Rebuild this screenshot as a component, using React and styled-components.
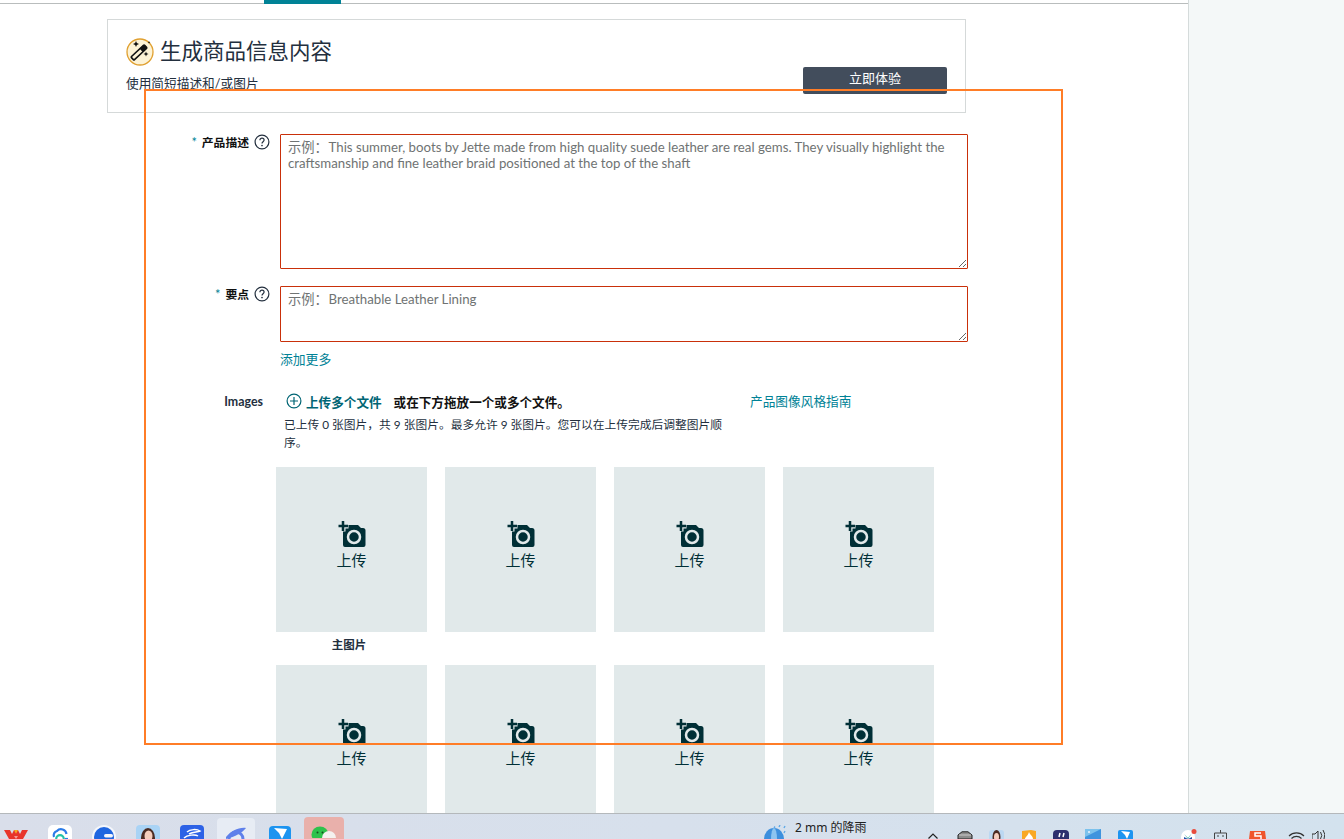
import React from "react";
import styled, { createGlobalStyle } from "styled-components";

const GlobalStyle = createGlobalStyle`
  html, body {
    margin: 0;
    padding: 0;
    height: 100%;
    overflow: hidden;
    background: #fff;
    font-family: "Lato", "Noto Sans CJK SC", sans-serif;
    color: #0f1111;
  }
`;

const WandIcon = () => (
  <svg width="28" height="28" viewBox="0 0 28 28">
    <circle cx="14" cy="14" r="13" fill="#fdf3d6" stroke="#e0a030" strokeWidth="1.3" />
    <g transform="rotate(47 13 14.500)">
      <rect x="10.800" y="5.500" width="4.400" height="18" rx=".8" fill="#fdf3d6" stroke="#111" strokeWidth="1.600" />
      <rect x="10.800" y="5.500" width="4.400" height="6" fill="#111" />
    </g>
    <path d="M10 3l.9 2.100L13 6l-2.100.9L10 9l-.9-2.100L7 6l2.100-.9z" fill="#111" />
    <path d="M20 13.500l.7 1.800 1.800.7-1.800.7-.7 1.800-.7-1.800-1.800-.7 1.800-.7z" fill="#111" />
    <path d="M23 3l.4 1 1 .4-1 .4-.4 1-.4-1-1-.4 1-.4z" fill="#111" />
  </svg>
);

const HelpIcon = () => (
  <svg width="16" height="16" viewBox="0 0 16 16" fill="none">
    <circle cx="8" cy="8" r="6.900" stroke="#232f3e" strokeWidth="1.200" />
    <path d="M5.900 6.200C5.900 4.900 6.900 4.200 8 4.200c1.200 0 2.100.8 2.100 1.900 0 1.600-2.100 1.700-2.100 3.400" stroke="#232f3e" strokeWidth="1.200" />
    <circle cx="8" cy="11.500" r=".85" fill="#232f3e" />
  </svg>
);

const PlusCircleIcon = () => (
  <svg width="16" height="16" viewBox="0 0 16 16" fill="none">
    <circle cx="8" cy="8" r="6.900" stroke="#006574" strokeWidth="1.200" />
    <path d="M8 4v8M4 8h8" stroke="#006574" strokeWidth="1.200" />
  </svg>
);

const CameraIcon = () => (
  <svg width="28" height="28" viewBox="0 0 28 28" fill="none">
    <path d="M10 5H20L23 8H25A2.500 2.500 0 0 1 27.500 10.500V25A2 2 0 0 1 25.500 27H7A2 2 0 0 1 5 25V8H10z" fill="#002f36" />
    <path d="M5 .5V11.500M0 6H10.500" stroke="#e1e9ea" strokeWidth="5" />
    <path d="M5 1V11M.5 6H10" stroke="#002f36" strokeWidth="2.500" />
    <circle cx="16" cy="17" r="6" stroke="#e1e9ea" strokeWidth="2.500" />
  </svg>
);

const TaskIcon = ({ kind }) => {
  if (kind === "wps") {
    return (
      <svg width="24" height="9" viewBox="0 0 24 9">
        <path d="M0 0h6l2 4 2-4h4l2 4 2-4h6l-5 9H5z" fill="#e8352b" />
        <path d="M10 0h4l-2 4z" fill="#f5a623" />
        <path d="M7 9l5-6 5 6z" fill="#e8352b" />
        <path d="M10 6l2 3 2-3z" fill="#fff" opacity=".5" />
      </svg>
    );
  }
  if (kind === "cloud") {
    return (
      <svg width="24" height="14" viewBox="0 0 24 14">
        <rect width="24" height="20" rx="5" fill="#fff" />
        <path d="M6 12a4.500 4.500 0 0 1 3-6 5.500 5.500 0 0 1 9.500 3" fill="none" stroke="#2b7be8" strokeWidth="2.200" />
        <circle cx="12" cy="14" r="3.800" fill="none" stroke="#22c2a8" strokeWidth="2.200" />
        <path d="M17 14h3" stroke="#2b7be8" strokeWidth="2.200" />
      </svg>
    );
  }
  if (kind === "ring") {
    return (
      <svg width="24" height="14" viewBox="0 0 24 14">
        <circle cx="12" cy="12" r="12" fill="#f4f6fb" />
        <circle cx="12" cy="12" r="10" fill="#1f66e0" />
        <rect x="12" y="9" width="9" height="3.500" rx="1.700" fill="#f4f6fb" />
      </svg>
    );
  }
  if (kind === "avatar") {
    return (
      <svg width="24" height="14" viewBox="0 0 24 14">
        <rect width="24" height="20" rx="4" fill="#a9d3f5" />
        <ellipse cx="12" cy="13" rx="7" ry="10" fill="#4a2a22" />
        <ellipse cx="12.500" cy="11" rx="4" ry="5.500" fill="#f4cdbd" />
      </svg>
    );
  }
  if (kind === "blue") {
    return (
      <svg width="24" height="14" viewBox="0 0 24 14">
        <rect width="24" height="20" rx="4" fill="#2d62e6" />
        <path d="M7 7c3-3 10-3 13-1-2 1-9 1-11 3M4 13c3-3 11-4 14-2" fill="none" stroke="#fff" strokeWidth="1.500" />
      </svg>
    );
  }
  if (kind === "browser") {
    return (
      <svg width="20" height="13" viewBox="0 0 20 13">
        <circle cx="10" cy="12" r="7" fill="none" stroke="#5f80ea" strokeWidth="3" />
        <path d="M0 10C5 4 13 0 20 1c-3 4-11 9-20 11z" fill="#5f80ea" />
      </svg>
    );
  }
  if (kind === "plane") {
    return (
      <svg width="22" height="13" viewBox="0 0 22 13">
        <rect width="22" height="18" rx="4" fill="#1d94f0" />
        <path d="M5 2l13 1-5 10-3-6z" fill="#fff" />
      </svg>
    );
  }
  if (kind === "wechat") {
    return (
      <svg width="26" height="12" viewBox="0 0 26 12">
        <ellipse cx="9" cy="8.500" rx="8.500" ry="8" fill="#2ec24c" />
        <circle cx="18" cy="12" r="7" fill="#f4f1ef" />
        <circle cx="6.500" cy="6.500" r="1" fill="#15501f" />
        <circle cx="11.500" cy="6.500" r="1" fill="#15501f" />
      </svg>
    );
  }
  if (kind === "weather") {
    return (
      <svg width="23" height="14" viewBox="0 0 23 14">
        <path d="M0 14A10 11 0 0 1 20 14z" fill="#3d8fdd" />
        <path d="M7 14A3 11 0 0 1 13 14z" fill="#8cc4f0" />
        <path d="M11 1.500l-1 1.500M16 0l-1 2M21 1l-1 2M21 6l-1 2" stroke="#5fa8e6" strokeWidth="1.400" />
      </svg>
    );
  }
  if (kind === "chevron") {
    return (
      <svg width="10" height="6" viewBox="0 0 10 6" fill="none">
        <path d="M.5 5.500L5 1l4.500 4.500" stroke="#222" strokeWidth="1.200" />
      </svg>
    );
  }
  if (kind === "cap") {
    return (
      <svg width="16" height="8" viewBox="0 0 16 8">
        <path d="M1 8V4L5 .8h6L15 4v4z" fill="#8c8c8c" stroke="#222" strokeWidth="1" />
        <path d="M2 4h12" stroke="#ccc" strokeWidth="1" />
      </svg>
    );
  }
  if (kind === "person") {
    return (
      <svg width="15" height="9" viewBox="0 0 15 9">
        <rect width="15" height="12" rx="3" fill="#bcd8f2" />
        <ellipse cx="7.500" cy="7" rx="4" ry="7" fill="#4a2a22" />
        <ellipse cx="7.500" cy="7" rx="2.500" ry="4" fill="#f4cdbd" />
      </svg>
    );
  }
  if (kind === "flame") {
    return (
      <svg width="14" height="9" viewBox="0 0 14 9">
        <path d="M0 1l9-1 5 1v8H0z" fill="#f9a825" />
        <path d="M7 2c1 3 4 4 4 7H3c0-2 3-3 4-7z" fill="#fff" />
      </svg>
    );
  }
  if (kind === "navy") {
    return (
      <svg width="16" height="9" viewBox="0 0 16 9">
        <rect width="16" height="13" rx="4" fill="#2e2f6e" />
        <path d="M7 3L6 7M11 3l-1 4" stroke="#fff" strokeWidth="1.500" />
      </svg>
    );
  }
  if (kind === "photo") {
    return (
      <svg width="16" height="10" viewBox="0 0 16 10">
        <rect width="16" height="10" fill="#3f94de" />
        <path d="M0 0h16L0 8z" fill="#7cc2ec" />
        <rect x="3" y="2" width="2" height="2" fill="#cfe6fa" />
      </svg>
    );
  }
  if (kind === "swift") {
    return (
      <svg width="15" height="9" viewBox="0 0 15 9">
        <rect width="15" height="12" rx="2" fill="#1d94f0" />
        <path d="M3 1l9 1-3 7-2-4z" fill="#fff" />
      </svg>
    );
  }
  if (kind === "multi") {
    return (
      <svg width="16" height="10" viewBox="0 0 16 10">
        <circle cx="7" cy="8" r="7" fill="#fff" />
        <path d="M3 5l4 4 4-5-4 6z" fill="#12a594" />
        <path d="M3 8l4 2 4-2v2H3z" fill="#1f4fa8" />
        <circle cx="13" cy="2.500" r="2.500" fill="#e84c3d" />
      </svg>
    );
  }
  if (kind === "robot") {
    return (
      <svg width="13" height="9" viewBox="0 0 13 9" fill="none">
        <path d="M6.500 0v3M.5 3h12v6M.5 3v6M4 5v2M9 5v2" stroke="#444" strokeWidth="1" />
      </svg>
    );
  }
  if (kind === "sogou") {
    return (
      <svg width="17" height="8" viewBox="0 0 17 8">
        <path d="M1 0h15l1 8H0z" fill="#f0552c" />
        <path d="M12 2H6v3h6v3" fill="none" stroke="#fff" strokeWidth="1.500" />
      </svg>
    );
  }
  if (kind === "wifi") {
    return (
      <svg width="17" height="7" viewBox="0 0 17 7" fill="none">
        <path d="M1 4a10.500 10.500 0 0 1 15 0M3.500 6.500a7 7 0 0 1 10 0" stroke="#333" strokeWidth="1.100" />
      </svg>
    );
  }
  return (
    <svg width="13" height="9" viewBox="0 0 13 9" fill="none">
      <path d="M0 4h3l3-3v9M0 4v5M8.500 2a6 6 0 0 1 0 7M11 0a9 9 0 0 1 1 9" stroke="#333" strokeWidth="1" />
    </svg>
  );
};

const tiles = [
  { id: 1, caption: "主图片" },
  { id: 2 },
  { id: 3 },
  { id: 4 },
  { id: 5 },
  { id: 6 },
  { id: 7 },
  { id: 8 },
];

const leftApps = [
  { kind: "wps", left: 4, top: 16 },
  { kind: "cloud", left: 20, top: 11 },
  { kind: "ring", left: 20, top: 11 },
  { kind: "avatar", left: 20, top: 11 },
  { kind: "blue", left: 20, top: 11 },
];

const trayApps = [
  { kind: "chevron", left: 0, top: 19 },
  { kind: "cap", left: 19, top: 17 },
  { kind: "person", left: 16, top: 16 },
  { kind: "flame", left: 18, top: 16 },
  { kind: "navy", left: 17, top: 16 },
  { kind: "photo", left: 16, top: 15 },
  { kind: "swift", left: 17, top: 16 },
  { kind: "multi", left: 48, top: 15 },
  { kind: "robot", left: 17, top: 16 },
  { kind: "sogou", left: 22, top: 17 },
  { kind: "wifi", left: 22, top: 18 },
  { kind: "speaker", left: 7, top: 16 },
];

export default function App() {
  return (
    <Screen>
      <GlobalStyle />
      <Main>
        <Content>
          <TopBar>
            <ActiveTab />
          </TopBar>
          <Page>
            <Banner>
              <BannerTitle>
                <WandIcon />
                <h1>生成商品信息内容</h1>
              </BannerTitle>
              <BannerFoot>
                <p>使用简短描述和/或图片</p>
                <TryButton>立即体验</TryButton>
              </BannerFoot>
            </Banner>

            <FormRow>
              <FieldLabel>
                <span>
                  <Star>*</Star> 产品描述
                </span>
                <HelpIcon />
              </FieldLabel>
              <Field
                $height={135}
                readOnly
                placeholder={"示例：\u200AThis summer, boots by Jette made from high quality suede leather are real gems. They visually highlight the craftsmanship and fine leather braid positioned at the top of the shaft"}
              />
            </FormRow>

            <FormRow>
              <FieldLabel>
                <span>
                  <Star>*</Star> 要点
                </span>
                <HelpIcon />
              </FieldLabel>
              <div>
                <Field $height={56} readOnly placeholder={"示例：\u200ABreathable Leather Lining"} />
                <AddMore href="#">添加更多</AddMore>
              </div>
            </FormRow>

            <ImagesRow>
              <ImagesLabel>Images</ImagesLabel>
              <ImagesHead>
                <div>
                  <UploadLine>
                    <PlusCircleIcon />
                    <UploadLink>上传多个文件</UploadLink>
                    <span>或在下方拖放一个或多个文件。</span>
                  </UploadLine>
                  <UploadNote>
                    已上传 0 张图片，共 9 张图片。最多允许 9 张图片。您可以在上传完成后调整图片顺序。
                  </UploadNote>
                </div>
                <GuideLink href="#">产品图像风格指南</GuideLink>
              </ImagesHead>
            </ImagesRow>

            <TileGrid>
              {tiles.map((tile) => (
                <TileCell key={tile.id}>
                  <Tile>
                    <CameraIcon />
                    <span>上传</span>
                  </Tile>
                  {tile.caption && <Caption>{tile.caption}</Caption>}
                </TileCell>
              ))}
            </TileGrid>
          </Page>
        </Content>
        <SideRail />
      </Main>

      <Taskbar>
        {leftApps.map((app) => (
          <TaskSlot key={app.kind} $left={app.left} $top={app.top}>
            <TaskIcon kind={app.kind} />
          </TaskSlot>
        ))}
        <ActiveApp $bg="#e7ecf4" $left={13} $width={38} $top={4}>
          <TaskIcon kind="browser" />
        </ActiveApp>
        <TaskSlot $left={14} $top={12}>
          <TaskIcon kind="plane" />
        </TaskSlot>
        <ActiveApp $bg="#e9b0ab" $left={13} $width={40} $top={3}>
          <TaskIcon kind="wechat" />
        </ActiveApp>
        <Weather>
          <TaskIcon kind="weather" />
          <span>2 mm 的降雨</span>
        </Weather>
        <Tray>
          {trayApps.map((app) => (
            <TaskSlot key={app.kind} $left={app.left} $top={app.top}>
              <TaskIcon kind={app.kind} />
            </TaskSlot>
          ))}
        </Tray>
      </Taskbar>

      <Highlight />
    </Screen>
  );
}

const Screen = styled.div`
  position: relative;
  display: flex;
  flex-direction: column;
  width: 1344px;
  height: 839px;
  overflow: hidden;
`;

const Main = styled.div`
  display: flex;
  flex: 1;
  min-height: 0;
`;

const Content = styled.main`
  width: 1188px;
  flex-shrink: 0;
  overflow: hidden;
  background: #fff;
  border-right: 1px solid #d5dbdb;
`;

const SideRail = styled.aside`
  flex: 1;
  background: #f4f8f8;
`;

const TopBar = styled.div`
  height: 3px;
  border-bottom: 1px solid #b9bdbd;
  padding-left: 264px;
`;

const ActiveTab = styled.div`
  width: 77px;
  height: 4px;
  background: #008296;
`;

const Page = styled.div`
  padding: 15px 0 0 107px;
`;

const Banner = styled.section`
  box-sizing: border-box;
  width: 859px;
  height: 94px;
  padding: 18px 18px 0;
  border: 1px solid #d5d9d9;
  margin-bottom: 21px;
`;

const BannerTitle = styled.div`
  display: flex;
  align-items: center;
  gap: 6px;

  h1 {
    margin: -2px 0 0;
    font-size: 21.500px;
    font-weight: 400;
    line-height: 28px;
    color: #232f3e;
  }
`;

const BannerFoot = styled.div`
  display: flex;
  justify-content: space-between;

  p {
    margin: 8px 0 0;
    font-size: 12.700px;
    line-height: 18px;
    color: #232f3e;
  }
`;

const TryButton = styled.button`
  width: 144px;
  height: 27px;
  margin-top: 1px;
  padding: 0 0 6px;
  border: none;
  border-radius: 2px;
  background: #424d5c;
  color: #fff;
  font-family: inherit;
  font-size: 13px;
`;

const FormRow = styled.div`
  display: grid;
  grid-template-columns: 163px 688px;
  column-gap: 10px;
  margin-bottom: 17px;
`;

const FieldLabel = styled.label`
  display: flex;
  justify-content: flex-end;
  align-items: center;
  align-self: start;
  gap: 5px;
  height: 16px;
  font-size: 11.800px;
  font-weight: 700;
  color: #0f1111;

  span {
    margin-top: -2px;
  }
`;

const Star = styled.span`
  margin-right: 2px;
  color: #008296;
  font-size: 13px;
  font-weight: 400;
`;

const Field = styled.textarea`
  display: block;
  box-sizing: border-box;
  width: 688px;
  height: ${(p) => p.$height}px;
  padding: 4px 7px;
  border: 1px solid #c9300a;
  border-radius: 1px;
  outline: none;
  font-family: "Lato", "Noto Sans CJK SC", sans-serif;
  font-size: 13.250px;
  line-height: 16px;
  color: #111;
  background: #fff;

  &::placeholder {
    color: #6f7373;
    opacity: 1;
  }
`;

const AddMore = styled.a`
  display: block;
  margin-top: 8px;
  font-size: 12.800px;
  line-height: 18px;
  color: #008296;
  text-decoration: none;
`;

const ImagesRow = styled.div`
  display: grid;
  grid-template-columns: 156px 1fr;
  column-gap: 21px;
  margin-top: 24px;
`;

const ImagesLabel = styled.div`
  padding-top: 3px;
  font-size: 12.400px;
  font-weight: 700;
  line-height: 14px;
  color: #232f3e;
  text-align: right;
`;

const ImagesHead = styled.div`
  display: grid;
  grid-template-columns: 442px auto;
  column-gap: 24px;
  align-items: start;
`;

const UploadLine = styled.div`
  display: flex;
  align-items: center;
  gap: 4px;
  padding-left: 2px;
  height: 18px;
  font-size: 12.600px;
  font-weight: 700;
  color: #111;
`;

const UploadLink = styled.span`
  color: #006574;
  margin-right: 8px;
`;

const UploadNote = styled.p`
  margin: 6px 0 0;
  font-size: 11.750px;
  line-height: 18px;
  color: #232f3e;
`;

const GuideLink = styled.a`
  font-size: 12.700px;
  line-height: 18px;
  color: #008296;
  text-decoration: none;
`;

const TileGrid = styled.div`
  display: grid;
  grid-template-columns: repeat(4, 151px);
  grid-auto-rows: 198px;
  column-gap: 18px;
  margin: 15px 0 0 169px;
`;

const TileCell = styled.div`
  display: flex;
  flex-direction: column;
  align-items: center;
`;

const Tile = styled.div`
  display: flex;
  flex-direction: column;
  align-items: center;
  box-sizing: border-box;
  width: 151px;
  height: 165px;
  padding-top: 53px;
  background: #e1e9ea;
  color: #002f36;
  font-size: 15px;
  line-height: 20px;

  span {
    margin-top: 2px;
  }
`;

const Caption = styled.div`
  margin-top: 6px;
  margin-right: 5px;
  font-size: 11.500px;
  font-weight: 700;
  line-height: 14px;
  color: #232f3e;
`;

const Taskbar = styled.footer`
  display: flex;
  flex-shrink: 0;
  align-items: flex-start;
  box-sizing: border-box;
  height: 26px;
  padding-right: 19px;
  border-top: 1px solid #b4b8bb;
  overflow: hidden;
  background: linear-gradient(90deg, #d9deea 0%, #d7e0ec 50%, #d3e2ee 100%);
  font-size: 12px;
  color: #222;
`;

const TaskSlot = styled.div`
  display: flex;
  flex-shrink: 0;
  margin-left: ${(p) => p.$left}px;
  margin-top: ${(p) => p.$top}px;
`;

const ActiveApp = styled.div`
  display: flex;
  flex-shrink: 0;
  justify-content: center;
  box-sizing: border-box;
  width: ${(p) => p.$width}px;
  height: 26px;
  margin-left: ${(p) => p.$left}px;
  margin-top: ${(p) => p.$top}px;
  padding-top: 9px;
  border-radius: 4px 4px 0 0;
  background: ${(p) => p.$bg};
`;

const Weather = styled.div`
  display: flex;
  align-items: flex-start;
  gap: 8px;
  margin-left: 420px;
  margin-top: 11px;
  font-family: "Noto Sans", "Noto Sans CJK SC", sans-serif;

  span {
    margin-top: -5px;
    line-height: 16px;
  }
`;

const Tray = styled.div`
  display: flex;
  margin-left: auto;
`;

const Highlight = styled.div`
  position: absolute;
  left: 144px;
  top: 89px;
  width: 919px;
  height: 656px;
  box-sizing: border-box;
  border: 2px solid #ff7d27;
  pointer-events: none;
`;
